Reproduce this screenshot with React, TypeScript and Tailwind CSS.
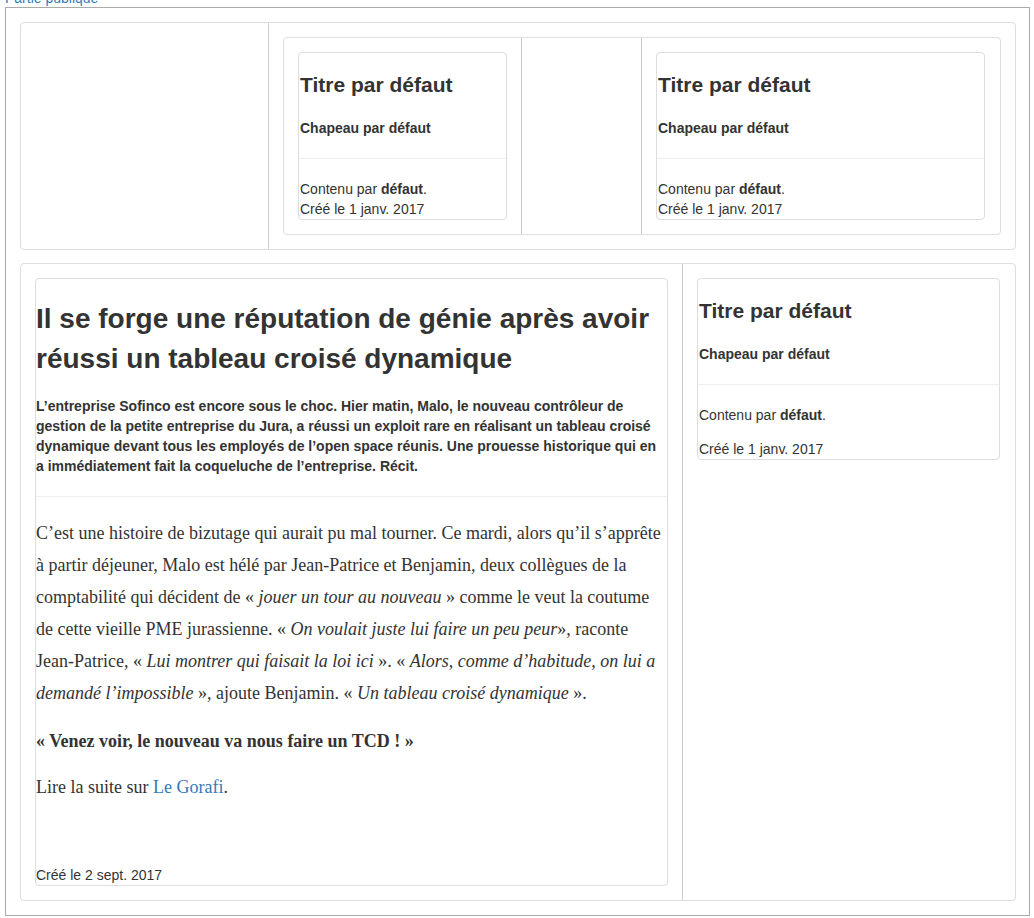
import React from "react";

function SmallCard({ spaced }: { spaced?: boolean }) {
  return (
    <div className="border border-[#ddd] rounded-[4px] pl-px">
      <h3 className="pt-5 text-[21px] leading-[23px] font-bold text-[#333]">Titre par défaut</h3>
      <p className="mt-[22px] text-[14px] leading-5 font-bold">Chapeau par défaut</p>
      <div className="mt-5 -ml-px border-t border-[#eee]"></div>
      <p className={"mt-5 text-[14px] leading-5 " + (spaced ? "mb-[14px]" : "")}>
        Contenu par <b>défaut</b>.
      </p>
      <p className="text-[14px] leading-5">Créé le 1 janv. 2017</p>
    </div>
  );
}

export default function App() {
  return (
    <div className="font-['Liberation_Sans',Arial,sans-serif] text-[14px] leading-5 text-[#333] bg-white min-h-[918px] overflow-hidden">
      <div className="mt-[-12px] pl-[5px] leading-5 text-[#337ab7]">Partie publique</div>
      <div className="mt-[-1px] ml-[5px] w-[1025px] border border-[#aaa] pl-[14px] pr-[13px] py-[14px] flex flex-col gap-[13px]">
        {/* Row 1 */}
        <div className="flex border border-[#ddd] rounded-[4px]">
          <div className="w-[248px] border-r border-[#ccc] shrink-0"></div>
          <div className="flex-1 p-[14px]">
            <div className="flex border border-[#ddd] rounded-[4px]">
              <div className="w-[238px] shrink-0 border-r border-[#ccc] p-[14px]">
                <SmallCard />
              </div>
              <div className="w-[120px] shrink-0 border-r border-[#ccc]"></div>
              <div className="flex-1 pl-[14px] pr-[15px] py-[14px]">
                <SmallCard />
              </div>
            </div>
          </div>
        </div>
        {/* Row 2 */}
        <div className="flex border border-[#ddd] rounded-[4px]">
          <div className="w-[662px] shrink-0 border-r border-[#ccc] p-[14px]">
            <div className="border border-[#ddd] rounded-[4px]">
              <h2 className="pt-[20px] text-[28px] leading-[40px] font-bold text-[#333]">
                Il se forge une réputation de génie après avoir réussi un tableau croisé dynamique
              </h2>
              <p className="mt-[17px] text-[14px] leading-5 font-bold">
                L’entreprise Sofinco est encore sous le choc. Hier matin, Malo, le nouveau contrôleur de gestion de la petite entreprise du Jura, a réussi un exploit rare en réalisant un tableau croisé dynamique devant tous les employés de l’open space réunis. Une prouesse historique qui en a immédiatement fait la coqueluche de l’entreprise. Récit.
              </p>
              <div className="mt-5 border-t border-[#eee]"></div>
              <div className="mt-5 font-['Liberation_Serif',serif] text-[18px] leading-[32px] text-[#333]">
                <p className="mb-[16px]">
                  C’est une histoire de bizutage qui aurait pu mal tourner. Ce mardi, alors qu’il s’apprête à partir déjeuner, Malo est hélé par Jean-Patrice et Benjamin, deux collègues de la comptabilité qui décident de « <i>jouer un tour au nouveau</i> » comme le veut la coutume de cette vieille PME jurassienne. « <i>On voulait juste lui faire un peu peur</i>», raconte Jean-Patrice, « <i>Lui montrer qui faisait la loi ici</i> ». « <i>Alors, comme d’habitude, on lui a demandé l’impossible</i> », ajoute Benjamin. « <i>Un tableau croisé dynamique</i> ».
                </p>
                <p className="mb-[14px] font-bold">« Venez voir, le nouveau va nous faire un TCD ! »</p>
                <p>
                  Lire la suite sur <a className="text-[#337ab7]">Le Gorafi</a>.
                </p>
              </div>
              <p className="mt-[62px] text-[14px] leading-5">Créé le 2 sept. 2017</p>
            </div>
          </div>
          <div className="flex-1 pl-[14px] pr-[15px] py-[14px]">
            <SmallCard spaced />
          </div>
        </div>
      </div>
    </div>
  );
}
